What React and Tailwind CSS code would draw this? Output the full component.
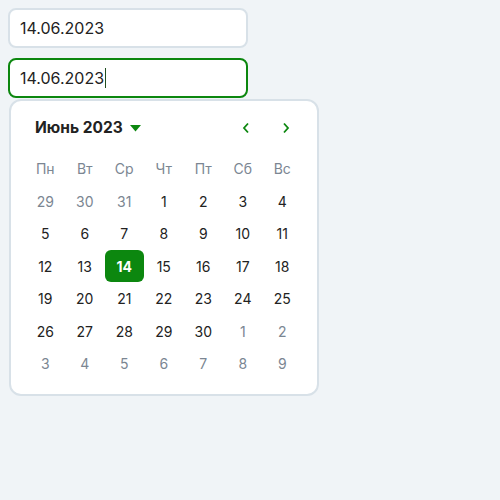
import React from "react";

const weekdays = ["Пн", "Вт", "Ср", "Чт", "Пт", "Сб", "Вс"];
const days = [
  [29, 1], [30, 1], [31, 1], [1], [2], [3], [4],
  [5], [6], [7], [8], [9], [10], [11],
  [12], [13], [14, 2], [15], [16], [17], [18],
  [19], [20], [21], [22], [23], [24], [25],
  [26], [27], [28], [29], [30], [1, 1], [2, 1],
  [3, 1], [4, 1], [5, 1], [6, 1], [7, 1], [8, 1], [9, 1],
];

export default function App() {
  return (
    <div
      className="w-[500px] h-[500px] bg-[#f0f4f7] pt-2 pl-2"
      style={{ fontFamily: 'Inter, "Noto Sans", sans-serif' }}
    >
      <div className="w-[240px] h-10 rounded-lg border-2 border-[#d8e1e8] bg-white flex items-center pl-[10px] text-[16px] text-[#222]">
        14.06.2023
      </div>
      <div className="mt-[10px] w-[240px] h-10 rounded-lg border-2 border-[#0c870f] bg-white flex items-center pl-[10px] text-[16px] text-[#222]">
        14.06.2023
        <span className="inline-block w-px h-[20px] bg-[#1f4d1f] ml-px" />
      </div>
      <div className="ml-px mt-px w-[310px] rounded-xl border-2 border-[#d8e1e8] bg-white pt-[11px] pb-[14px] px-[14px]">
        <div className="h-8 flex items-center pl-[10px] pr-[10px]">
          <span className="text-[15.5px] font-bold text-[#222]">Июнь 2023</span>
          <svg width="11" height="7" viewBox="0 0 11 7" className="ml-[7px]">
            <path d="M0 0 H11 L5.5 6.5 Z" fill="#0c870f" />
          </svg>
          <div className="flex-1" />
          <svg width="8" height="12" viewBox="0 0 8 12" className="mr-[32px]">
            <path d="M6 1.5 L2 6 L6 10.5" fill="none" stroke="#0c870f" strokeWidth="1.8" />
          </svg>
          <svg width="8" height="12" viewBox="0 0 8 12" className="mr-[3px]">
            <path d="M2 1.5 L6 6 L2 10.5" fill="none" stroke="#0c870f" strokeWidth="1.8" />
          </svg>
        </div>
        <div className="mt-[7px] grid grid-cols-[repeat(7,39.5px)] w-[277px] mx-auto">
          {weekdays.map((w) => (
            <div key={w} className="h-[34px] flex items-center justify-center text-[14px] text-[#7b8692]">
              {w}
            </div>
          ))}
          {days.map(([d, k], i) => (
            <div key={i} className="h-[32.5px] flex items-center justify-center">
              {k === 2 ? (
                <div className="w-[39px] h-8 rounded-md bg-[#0c870f] text-white font-bold text-[14px] flex items-center justify-center">
                  {d}
                </div>
              ) : (
                <span className={"text-[14px] " + (k === 1 ? "text-[#7b8692]" : "text-[#222]")}>{d}</span>
              )}
            </div>
          ))}
        </div>
      </div>
    </div>
  );
}
